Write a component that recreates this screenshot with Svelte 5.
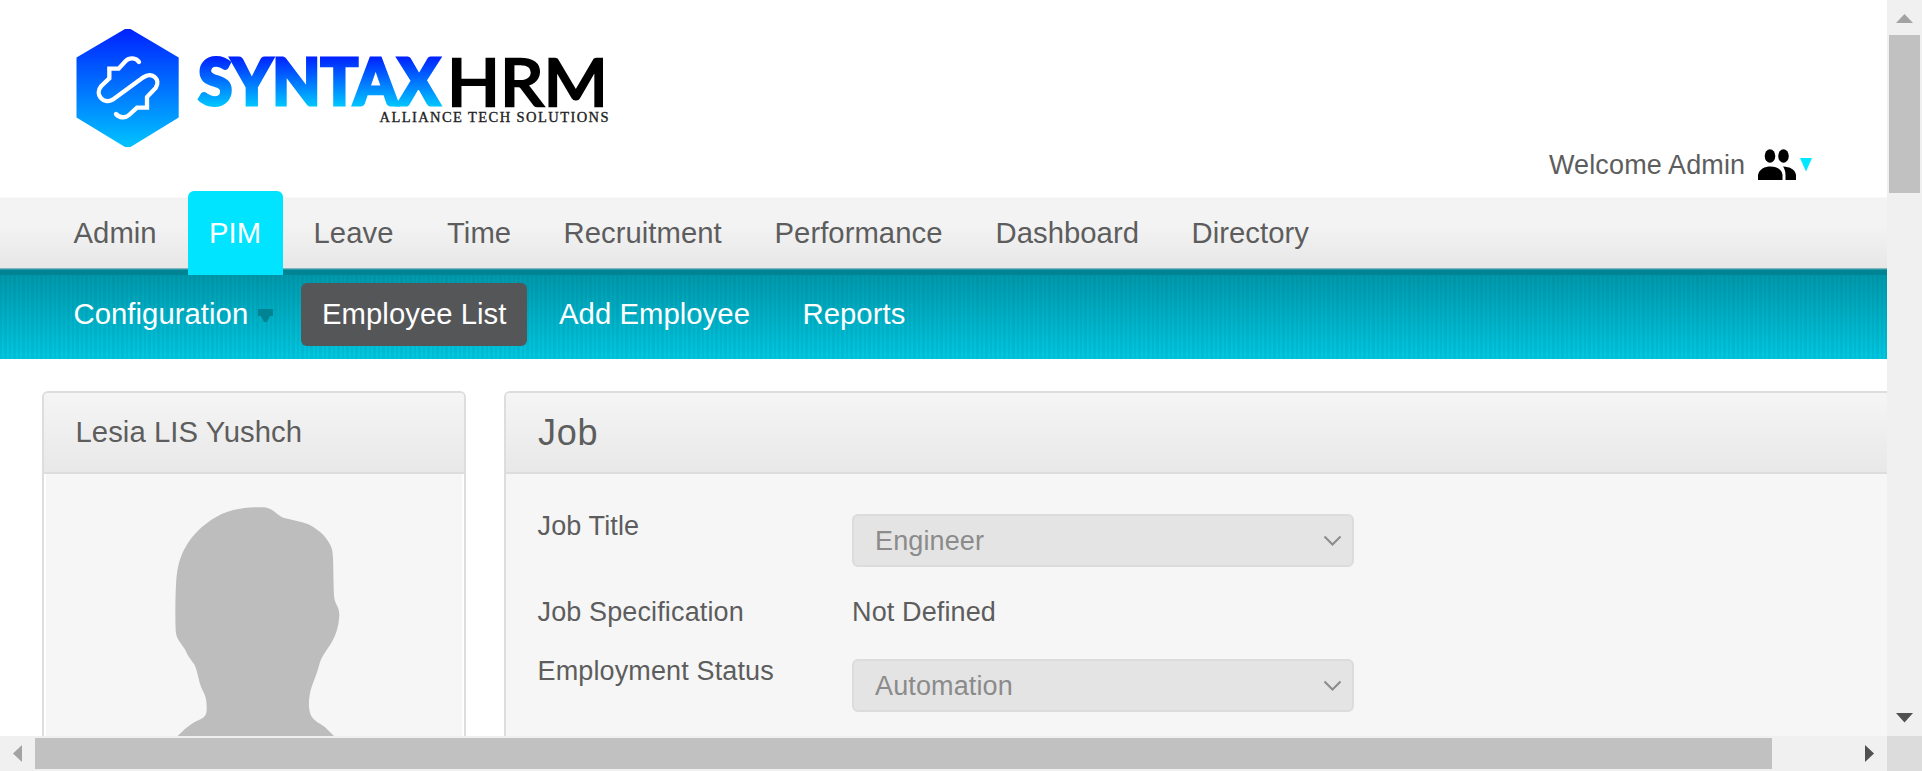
<script>
  const menu = [
    { label: 'Admin', w: 82.5, gap: 53 },
    { label: 'PIM', w: 52, gap: 52.4, active: true },
    { label: 'Leave', w: 80, gap: 53.5 },
    { label: 'Time', w: 63.5, gap: 53 },
    { label: 'Recruitment', w: 159, gap: 52 },
    { label: 'Performance', w: 168.5, gap: 52.5 },
    { label: 'Dashboard', w: 144, gap: 52 },
    { label: 'Directory', w: 118, gap: 0 }
  ];
  const rows = [
    { label: 'Job Title', value: 'Engineer', select: true },
    { label: 'Job Specification', value: 'Not Defined', select: false },
    { label: 'Employment Status', value: 'Automation', select: true }
  ];
</script>

<div class="window">
  <div class="page">
    <header>
      <svg class="logo" width="560" height="145" viewBox="60 15 560 145">
        <defs>
          <linearGradient id="hex" x1="0" y1="0" x2="0" y2="1"><stop offset="0" stop-color="#0022ff" /><stop offset="1" stop-color="#00c3ff" /></linearGradient>
          <linearGradient id="word" gradientUnits="userSpaceOnUse" x1="0" y1="57" x2="0" y2="107"><stop offset="0" stop-color="#0022ff" /><stop offset="1" stop-color="#00c8ff" /></linearGradient>
        </defs>
        <path d="M125 29H130.500L178.700 57.500V117.500L130.500 147H125L76.500 117.500V57.500Z" fill="url(#hex)" />
        <g transform="translate(60 15) scale(.33333)">
          <path d="M237 141C228 127 208 127 197 138L176 161H148V190L124 213C102 238 130 270 158 254L250 187C278 168 303 195 287 219L261 246V278H231L207 300C196 310 178 309 168 297" fill="none" stroke="#fff" stroke-width="13" stroke-linecap="round" stroke-linejoin="miter" />
        </g>
        <text class="syntax" x="198" y="104.500" textLength="242" lengthAdjust="spacingAndGlyphs" fill="url(#word)" stroke="url(#word)">SYNTAX</text>
        <text class="hrm" x="447" y="106" textLength="161" lengthAdjust="spacingAndGlyphs">HRM</text>
        <text class="tag" x="379.500" y="122" textLength="229">ALLIANCE TECH SOLUTIONS</text>
      </svg>
      <div class="welcome">
        <span>Welcome Admin</span>
        <svg class="people" width="40" height="34" viewBox="0 0 40 34">
          <ellipse cx="13" cy="9" rx="5.300" ry="6.700" /><ellipse cx="26.500" cy="9" rx="5.300" ry="6.700" />
          <path d="M1 33V28C2 22 8 19.500 13.500 19.500S25 22 25.500 28V33Z" />
          <path d="M26 19.500C33 19.500 38.500 23 39 28V33H28.500V28C28.500 24 27.500 22 26 19.500Z" />
        </svg>
        <svg class="caret" width="12" height="14" viewBox="0 0 12 14"><path d="M0 0H12L6 13.500Z" fill="#00e8ff" /></svg>
      </div>
    </header>

    <nav class="menu">
      {#each menu as m}
        <a class:active={m.active} style="width:{m.w}px;margin-right:{m.active ? 31 : m.gap}px">{m.label}</a>
      {/each}
    </nav>
    <nav class="submenu">
      <a class="config">Configuration
        <svg width="15" height="13" viewBox="0 0 15 13"><path d="M0 0H15V7H12L9 13H6L3 7H0Z" fill="#008493" /></svg>
      </a>
      <a class="current">Employee List</a>
      <a class="add">Add Employee</a>
      <a class="reports">Reports</a>
    </nav>

    <main>
      <section class="card profile">
        <h2>Lesia LIS Yushch</h2>
        <div class="photo">
          <svg width="416" height="262" viewBox="16 -6 416 262">
            <g transform="scale(.33333)">
              <path d="M440 771L445 766C465 746 480 733 500 723C520 715 530 708 530 690C531 650 524 645 513 620C505 600 503 575 494 555C484 540 473 528 466 510C455 492 441 480 438 460C435 430 436 350 438 315C440 275 446 240 463 208C490 155 535 122 575 102C610 87 650 80 700 82C730 84 735 102 760 113C785 120 810 123 835 133C870 150 897 178 906 208C912 235 909 300 913 355C916 375 928 380 928 405C926 440 918 465 905 487C892 510 877 525 869 550C860 585 851 600 842 630C834 665 834 700 850 716C863 730 875 732 887 743L915 771Z" fill="#bdbdbd" />
            </g>
          </svg>
        </div>
      </section>
      <section class="card job">
        <h1>Job</h1>
        <div class="form">
          {#each rows as r}
            <div class="row" class:plain={!r.select}>
              <span class="label">{r.label}</span>
              {#if r.select}
                <div class="select">
                  <span>{r.value}</span>
                  <svg width="19" height="12" viewBox="0 0 19 12"><path d="M1.500 1.500L9.500 9.500L17.500 1.500" fill="none" stroke="#8b8b8b" stroke-width="2" /></svg>
                </div>
              {:else}
                <span class="value">{r.value}</span>
              {/if}
            </div>
          {/each}
        </div>
      </section>
    </main>
  </div>

  <div class="vbar">
    <svg width="35" height="35"><path d="M9 23L17.500 14L26 23Z" fill="#a3a3a3" /></svg>
    <div class="vthumb"></div>
    <svg class="end" width="35" height="35"><path d="M9 12H26L17.500 21.500Z" fill="#505050" /></svg>
  </div>
  <div class="hbar">
    <svg width="35" height="35"><path d="M22 9V26L13 17.500Z" fill="#a3a3a3" /></svg>
    <div class="hthumb"></div>
    <svg class="end" width="35" height="35"><path d="M13 9V26L22 17.500Z" fill="#505050" /></svg>
  </div>
  <div class="corner"></div>
</div>

<style>
  :global(body) { margin: 0; overflow: hidden; }
  .window {
    display: grid;
    grid-template: 736px 35px / 1887px 35px;
    width: 1922px;
    height: 771px;
    font-family: "Liberation Sans", Arial, sans-serif;
    color: #5d5d5d;
    background: #fff;
  }
  .page { overflow: hidden; min-width: 0; }
  header { height: 197px; display: flex; justify-content: space-between; box-sizing: border-box; padding: 15px 75px 0 60px; }
  .logo { flex: none; }
  .syntax { font: 900 65px Lato, sans-serif; stroke-width: 3px; }
  .hrm { font: 400 65px Lato, sans-serif; fill: #000; stroke: #000; stroke-width: 2.6px; }
  .tag { font: 400 14.5px "Liberation Serif", serif; fill: #222; stroke: #222; stroke-width: .35px; }
  .welcome { display: flex; align-items: flex-start; font-size: 27px; line-height: 31px; padding-top: 134.5px; letter-spacing: .12px; }
  .welcome span { width: 194px; white-space: nowrap; padding-top: .5px; }
  .people { margin: -3px 3px 0 14px; }
  .caret { margin-top: 8px; }
  .menu {
    display: flex;
    height: 71px;
    box-sizing: border-box;
    padding-left: 73.5px;
    background: linear-gradient(#f9f9f9 0 1px, #f3f3f3 1px 40%, #e7e7e7);
    font-size: 29.25px;
    line-height: 72px;
    letter-spacing: .05px;
  }
  .menu a { white-space: nowrap; flex: none; }
  .menu .active {
    position: relative;
    z-index: 1;
    height: 84px;
    margin: -6px 0 0 -21.5px;
    padding: 0 21.5px;
    border-radius: 6px 6px 0 0;
    background: #00e4ff;
    color: #fff;
    line-height: 84px;
  }
  .submenu {
    display: flex;
    align-items: flex-start;
    height: 91px;
    box-sizing: border-box;
    padding: 15px 0 0 73.5px;
    background:
      linear-gradient(#7fb9c1 0 1px, #2c96a4 1px 2px, #008392 2px 7px, transparent 7px),
      repeating-linear-gradient(90deg, rgba(0, 70, 90, .08) 0 2.25px, transparent 2.25px 4.5px),
      linear-gradient(#0098ab 7px, #00c8e1);
    color: #fff;
    font-size: 29.25px;
    line-height: 63px;
    letter-spacing: .06px;
    white-space: nowrap;
  }
  .config { width: 227.5px; display: flex; align-items: center; gap: 10px; }
  .config svg { margin-top: 2px; }
  .current { width: 226px; height: 63px; box-sizing: border-box; padding-left: 21px; background: #555658; border-radius: 6px; }
  .add { margin-left: 32px; width: 243.5px; }
  main { display: flex; gap: 38px; padding: 32px 0 0 42px; }
  .card { box-sizing: border-box; height: 400px; border: 2px solid #ddd; border-radius: 6px; background: #f6f6f6; flex: none; overflow: hidden; }
  .profile { width: 424px; }
  .job { width: 1500px; }
  h1, h2 { margin: 0; height: 79px; border-bottom: 2px solid #ddd; background: linear-gradient(#f5f5f5, #e8e8e8); font-weight: 400; }
  h2 { font-size: 29.25px; padding-left: 31.5px; line-height: 78px; letter-spacing: .07px; }
  h1 { font-size: 36px; padding-left: 32px; line-height: 80px; letter-spacing: .8px; }
  .photo { border: solid #fff; border-width: 0 2px; height: 310px; }
  .photo svg { display: block; }
  .form { font-size: 27px; padding: 40px 0 0 31.5px; letter-spacing: .13px; }
  .row { display: flex; height: 86px; line-height: 31px; }
  .row.plain { height: 59px; }
  .label { width: 314.5px; margin-top: -3px; }
  .value { margin-top: -3px; }
  .select { box-sizing: border-box; width: 502px; height: 53px; border: 2px solid #dcdcdc; border-radius: 6px; background: #e4e4e4; color: #8b8b8b; display: flex; align-items: center; justify-content: space-between; padding: 1px 10px 0 21px; }
  .vbar { background: #f0f0f0; display: flex; flex-direction: column; align-items: center; }
  .vthumb { width: 31px; height: 158px; background: #c1c1c1; }
  .vbar .end { margin-top: auto; }
  .hbar { background: #f0f0f0; display: flex; align-items: center; }
  .hthumb { height: 31px; width: 1737px; background: #c1c1c1; }
  .hbar .end { margin-left: auto; }
  .corner { background: #dcdcdc; }
</style>
